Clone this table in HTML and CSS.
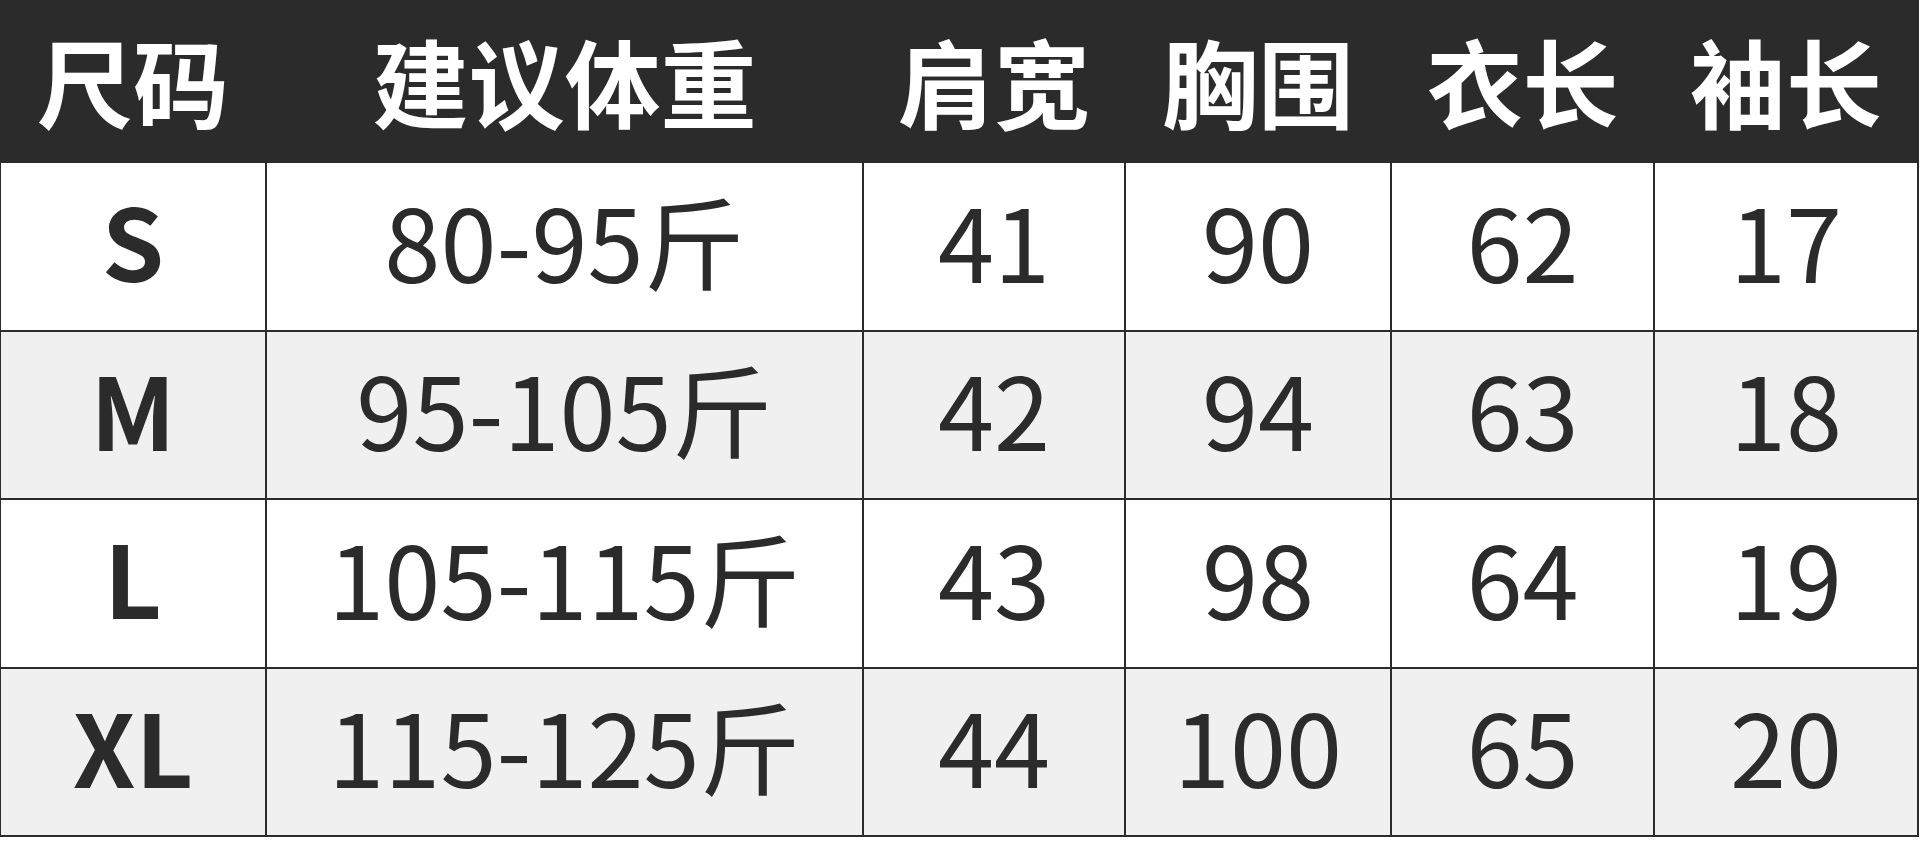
FILE: index.html
```html
<!DOCTYPE html>
<html lang="zh-CN">
<head>
<meta charset="utf-8">
<title>尺码表</title>
<link rel="stylesheet" href="styles.css">
</head>
<body>
<div class="chart">
  <div class="cell head">尺码</div>
  <div class="cell head">建议体重</div>
  <div class="cell head">肩宽</div>
  <div class="cell head">胸围</div>
  <div class="cell head">衣长</div>
  <div class="cell head">袖长</div>

  <div class="cell size">S</div>
  <div class="cell">80-95斤</div>
  <div class="cell">41</div>
  <div class="cell">90</div>
  <div class="cell">62</div>
  <div class="cell">17</div>

  <div class="cell size alt">M</div>
  <div class="cell alt">95-105斤</div>
  <div class="cell alt">42</div>
  <div class="cell alt">94</div>
  <div class="cell alt">63</div>
  <div class="cell alt">18</div>

  <div class="cell size">L</div>
  <div class="cell">105-115斤</div>
  <div class="cell">43</div>
  <div class="cell">98</div>
  <div class="cell">64</div>
  <div class="cell">19</div>

  <div class="cell size alt">XL</div>
  <div class="cell alt">115-125斤</div>
  <div class="cell alt">44</div>
  <div class="cell alt">100</div>
  <div class="cell alt">65</div>
  <div class="cell alt">20</div>
</div>
</body>
</html>
```

FILE: styles.css
```css
html, body {
  margin: 0;
  padding: 0;
  background: #ffffff;
}

body {
  font-family: "Noto Sans CJK SC", "Noto Sans", sans-serif;
  color: #2b2b2b;
  width: 1920px;
  height: 868px;
  overflow: hidden;
}

.chart {
  display: grid;
  grid-template-columns: 264px 595px 260px 264px 261px 262px;
  grid-template-rows: 161px 166.5px 166.5px 166.5px 166.5px;
  column-gap: 2px;
  row-gap: 2px;
  padding: 0 2px 2px 1px;
  width: max-content;
  background: #2b2b2b;
}

.cell {
  display: flex;
  align-items: center;
  justify-content: center;
  background: #ffffff;
  font-size: 101px;
  font-weight: 400;
  line-height: 1;
  padding-bottom: 14px;
  box-sizing: border-box;
  white-space: nowrap;
}

.cell.alt {
  background: #f0f0f0;
}

.cell.head {
  background: #2b2b2b;
  color: #ffffff;
  font-size: 96px;
  font-weight: 700;
  padding-bottom: 2px;
}

.cell.size {
  font-size: 100px;
  font-weight: 700;
}
```
